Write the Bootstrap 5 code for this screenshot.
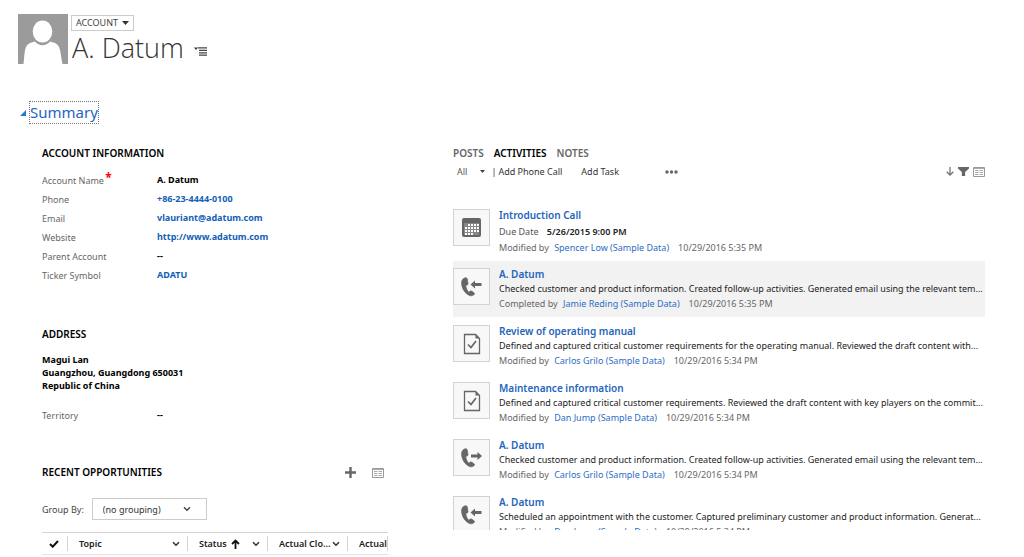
<!DOCTYPE html>
<html lang="en">
<head>
<meta charset="utf-8">
<meta name="viewport" content="width=device-width, initial-scale=1">
<title>Account: A. Datum</title>
<link rel="stylesheet" href="https://cdn.jsdelivr.net/npm/bootstrap@5.3.0/dist/css/bootstrap.min.css">
<style>
body { font-family: "Noto Sans", "Open Sans", sans-serif; font-size: 9px; line-height: 15px; color: #000; background: #fff; overflow: hidden; }
a { color: #1160b7; text-decoration: none; }
button { background: none; border: 0; padding: 0; color: inherit; }
svg { display: block; flex: none; }
h2 { font-size: 10px; line-height: 15px; font-weight: 600; margin: 0; }
.avatar { width: 50px; height: 50px; }
.entity-head { padding: 14px 18px 0; gap: 3px; }
.entity-type { border: 1px solid #ccc; color: #444; height: 16px; line-height: 14px; padding: 0 4px; gap: 4px; margin-top: 1px; }
.entity-name { font-family: "Open Sans", "Noto Sans", sans-serif; font-size: 27px; font-weight: 300; line-height: 34px; color: #333; margin: 0; }
.name-row { gap: 10px; padding-left: 1px; }
.name-row button { margin-top: 6px; }
.section-head { padding: 36px 20px 0; gap: 3px; }
.section-link { font-size: 15px; line-height: 21px; color: #1f66c1; border: 1px dotted #777; }
.form-grid { display: grid; grid-template-columns: minmax(0, 346fr) minmax(0, 532fr); column-gap: 65px; padding: 22px 39px 0 42px; }
.field { line-height: 19px; }
.field dt { width: 115px; font-weight: 400; color: #666; padding-top: 1px; margin-bottom: -1px; }
.field dd { margin: 0; font-weight: 700; }
.required { color: #f00; font-size: 12px; line-height: 9px; font-weight: 700; margin-left: -1px; vertical-align: 2px; }
.address { line-height: 13px; font-weight: 700; font-style: normal; margin: 0; }
.gap-fields { margin-top: 9px; }
.gap-address { margin-top: 43px; }
.gap-lines { margin-top: 11px; }
.gap-territory { margin-top: 13px; }
.gap-opps { margin-top: 41px; }
.group-by { margin-top: 18px; gap: 8px; color: #444; }
.group-select { width: 115px; height: 22px; padding: 0 10px; border: 1px solid #ccc; border-radius: 0; font-size: 9px; color: #333; appearance: none;
  background: #fff url("data:image/svg+xml,%3Csvg xmlns='http://www.w3.org/2000/svg' viewBox='0 0 8 6'%3E%3Cpath d='M1 1.3 4 4.3 7 1.3' fill='none' stroke='%23444' stroke-width='1.4'/%3E%3C/svg%3E") no-repeat right 15px center / 8px 6px; }
.opps-wrap { overflow: hidden; margin-top: 12px; }
.opps { table-layout: fixed; width: 100%; border-collapse: separate; border-spacing: 0; }
.opps th { height: 23px; padding: 0; border-top: 1px solid #d4d4d4; border-bottom: 1px solid #e2e2e2; font-weight: 600; color: #222; white-space: nowrap; overflow: hidden; }
.opps .cell { border-right: 1px solid #d4d4d4; height: 15px; padding: 0 7px 0 11px; }
.opps th:first-child .cell { padding: 0 7px; }
.col-check { width: 26px; } .col-topic { width: 120px; } .col-mid { width: 80px; }
.tabs { gap: 10px; font-size: 10px; color: #666; }
.tabs button { font-weight: 600; }
.tabs .active { color: #000; }
.tools { padding-left: 4px; height: 17px; margin-top: 2px; margin-bottom: 1px; color: #333; }
.tools .filter { gap: 13px; color: #555; margin-right: 6px; }
.tools .phone { margin: 0 19px 0 2px; }
.tools .more { margin-left: 46px; }
.tools .funnel { margin-right: 4px; }
.feed { max-height: 328px; overflow: hidden; margin: 22px 0 0; }
.feed-item { height: 56px; margin-bottom: 1px; padding-top: 7px; gap: 9px; white-space: nowrap; }
.feed-item:first-child { height: 58px; }
.feed-item.selected { background: #f2f2f2; }
.tile { width: 37px; height: 37px; border: 1px solid #d2d2d2; background: #f8f8f8; color: #666; flex: none; }
.feed-title { display: block; font-size: 10px; line-height: 13px; font-weight: 600; color: #2365bd; }
.feed-text { color: #222; overflow: hidden; }
.feed-text.due { color: #555; line-height: 17px; padding-top: 1px; }
.feed-text.due strong { font-weight: 600; color: #222; margin-left: 6px; }
.feed-meta { color: #666; }
.feed-meta a { color: #2d6dc5; margin: 0 9px 0 3px; }
</style>
</head>
<body>
<svg class="d-none" aria-hidden="true">
  <symbol id="chev" viewBox="0 0 8 6"><path d="M1 1.3 4 4.3 7 1.3" fill="none" stroke="#333" stroke-width="1.5"/></symbol>
  <symbol id="sheet" viewBox="0 0 12 10"><path d="M.5.5h11v9H.5z" fill="#fff" stroke="#999"/><path d="M1 1.5h10" stroke="#aaa"/><path d="M2 3.5h3.5M6.500 3.500H10M2 5.500h3.500M6.500 5.500H10M2 7.500h3.500M6.500 7.500H10" stroke="#aaa"/></symbol>
  <symbol id="handset" viewBox="0 0 12 17"><path d="M3.200.7C1.300 1.300.4 3 .5 5.400c.2 4.800 3.500 9.300 7.300 10.500 1.500.4 3.100-.2 3.700-1.300.2-.5 0-.9-.4-1.200l-2-1.400c-.5-.3-1-.2-1.400.2l-.9.8C5 11.400 4.300 9.300 4.100 7.100l1.300-.4c.5-.2.700-.6.6-1.100L5.400 1.600C5.300.9 4.200.4 3.200.7z" fill="currentColor" stroke="currentColor" stroke-width=".6"/></symbol>
  <symbol id="call-in" viewBox="0 0 21 20"><use href="#handset" x="0" y="0" width="14" height="20"/><path d="M9.500 7.500 14 3.500v2.600h6.500v2.800H14v2.600z" fill="currentColor"/></symbol>
  <symbol id="call-out" viewBox="0 0 21 20"><use href="#handset" x="0" y="0" width="14" height="20"/><path d="M21 8 16.500 4v2.600H10v2.800h6.500V12z" fill="currentColor"/></symbol>
  <symbol id="task" viewBox="0 0 18 22"><path d="M1.500 1.500h11l4 4v15h-15z" fill="none" stroke="currentColor" stroke-width="1.300"/><path d="M12.500 1v4.500H17z" fill="currentColor"/><path d="m5 11.500 3 3L13 8" fill="none" stroke="currentColor" stroke-width="1.700"/></symbol>
  <symbol id="appt" viewBox="0 0 19 19"><path d="M2 0h15q2 0 2 2v15q0 2-2 2H2q-2 0-2-2V2q0-2 2-2z" fill="currentColor"/><path d="M2 5h15v12H2z" fill="#888"/><path d="M6 6h2v2H6zm3 0h2v2H9zm3 0h2v2h-2zm3 0h2v2h-2zM3 9h2v2H3zm3 0h2v2H6zm3 0h2v2H9zm3 0h2v2h-2zm3 0h2v2h-2zM3 12h2v2H3zm3 0h2v2H6zm3 0h2v2H9zm3 0h2v2h-2zm3 0h2v2h-2zM3 15h2v2H3zm3 0h2v2H6zm3 0h2v2H9z" fill="#fff"/></symbol>
</svg>

<header class="entity-head d-flex">
  <svg class="avatar" viewBox="0 0 50 50" role="img" aria-label="Account picture"><path d="M0 0h50v50H0z" fill="#9b9b9b"/><ellipse cx="24.500" cy="17.500" rx="9.800" ry="11" fill="#fff"/><path d="M5.500 50C7 38 6 32 12 29l5-1.500c4 5 11 5 15 0l5 1.500c6 3 5 9 7.500 21z" fill="#fff"/></svg>
  <div>
    <button type="button" class="entity-type d-flex align-items-center">ACCOUNT
      <svg width="7" height="4" viewBox="0 0 7 4"><path d="M0 0h7L3.500 4z" fill="#333"/></svg>
    </button>
    <div class="name-row d-flex align-items-center">
      <h1 class="entity-name">A. Datum</h1>
      <button type="button" aria-label="Form sections"><svg width="14" height="9" viewBox="0 0 14 9"><path d="M0 .5h4L2 3z" fill="#333"/><path d="M4 .8h9M5 3.300h8M5 5.800h8M5 8.200h8" stroke="#444" stroke-width="1.200"/></svg></button>
    </div>
  </div>
</header>

<div class="section-head d-flex align-items-center">
  <svg width="6" height="6" viewBox="0 0 6 6"><path d="M6 0v6H0z" fill="#1b7fcc"/></svg>
  <a href="#summary" class="section-link">Summary</a>
</div>

<main id="summary" class="form-grid">
  <div>
    <h2>ACCOUNT INFORMATION</h2>
    <dl class="mb-0 gap-fields">
      <div class="field d-flex"><dt>Account Name <span class="required">*</span></dt><dd>A. Datum</dd></div>
      <div class="field d-flex"><dt>Phone</dt><dd><a href="tel:+862344440100">+86-23-4444-0100</a></dd></div>
      <div class="field d-flex"><dt>Email</dt><dd><a href="mailto:vlauriant@adatum.com">vlauriant@adatum.com</a></dd></div>
      <div class="field d-flex"><dt>Website</dt><dd><a href="http://www.adatum.com">http://www.adatum.com</a></dd></div>
      <div class="field d-flex"><dt>Parent Account</dt><dd>--</dd></div>
      <div class="field d-flex"><dt>Ticker Symbol</dt><dd><a href="#ticker">ADATU</a></dd></div>
    </dl>

    <h2 class="gap-address">ADDRESS</h2>
    <address class="address gap-lines">Magui Lan<br>Guangzhou, Guangdong 650031<br>Republic of China</address>
    <dl class="mb-0 gap-territory">
      <div class="field d-flex"><dt>Territory</dt><dd>--</dd></div>
    </dl>

    <div class="d-flex align-items-center gap-opps">
      <h2 class="me-auto">RECENT OPPORTUNITIES</h2>
      <button type="button" class="me-3" aria-label="Add opportunity"><svg width="11" height="11" viewBox="0 0 11 11"><path d="M5.500 0v11M0 5.500h11" stroke="#666" stroke-width="2.400"/></svg></button>
      <button type="button" class="me-1" aria-label="Open view"><svg width="12" height="10"><use href="#sheet"/></svg></button>
    </div>
    <div class="d-flex align-items-center group-by">
      <label for="grouping">Group By:</label>
      <select id="grouping" class="group-select"><option>(no grouping)</option></select>
    </div>
    <div class="opps-wrap">
      <table class="opps">
        <colgroup><col class="col-check"><col class="col-topic"><col class="col-mid"><col class="col-mid"><col></colgroup>
        <thead><tr>
          <th scope="col" aria-label="Selected"><div class="cell d-flex align-items-center"><svg width="10" height="8" viewBox="0 0 10 8"><path d="m1 4 2.700 2.700L9 1" fill="none" stroke="#111" stroke-width="2"/></svg></div></th>
          <th scope="col"><div class="cell d-flex align-items-center justify-content-between">Topic<svg width="8" height="6"><use href="#chev"/></svg></div></th>
          <th scope="col"><div class="cell d-flex align-items-center">Status<svg class="ms-1" width="9" height="10" viewBox="0 0 9 10"><path d="M4.500 10V1.500M1 5l3.500-3.500L8 5" fill="none" stroke="#111" stroke-width="1.800"/></svg><svg class="ms-auto" width="8" height="6"><use href="#chev"/></svg></div></th>
          <th scope="col"><div class="cell d-flex align-items-center justify-content-between">Actual Clo...<svg width="8" height="6"><use href="#chev"/></svg></div></th>
          <th scope="col"><div class="cell d-flex align-items-center pe-0 overflow-hidden">Actual</div></th>
        </tr></thead>
      </table>
    </div>
  </div>

  <div>
    <div class="tabs d-flex" role="tablist">
      <button type="button" role="tab" aria-selected="false">POSTS</button>
      <button type="button" role="tab" aria-selected="true" class="active">ACTIVITIES</button>
      <button type="button" role="tab" aria-selected="false">NOTES</button>
    </div>
    <div class="tools d-flex align-items-center">
      <button type="button" class="filter d-flex align-items-center">All <svg width="5" height="3" viewBox="0 0 5 3"><path d="M0 0h5L2.500 3z" fill="#444"/></svg></button>
      <span>|</span>
      <button type="button" class="phone">Add Phone Call</button>
      <button type="button">Add Task</button>
      <button type="button" class="more" aria-label="More commands"><svg width="13" height="4" viewBox="0 0 13 4"><g fill="#666"><circle cx="2" cy="2" r="1.700"/><circle cx="6.500" cy="2" r="1.700"/><circle cx="11" cy="2" r="1.700"/></g></svg></button>
      <div class="ms-auto d-flex align-items-center">
        <button type="button" class="me-1" aria-label="Sort descending"><svg width="8" height="9" viewBox="0 0 8 9"><path d="M4 0v8M.7 4.800 4 8l3.300-3.200" fill="none" stroke="#777" stroke-width="1.300"/></svg></button>
        <button type="button" class="funnel" aria-label="Filter"><svg width="11" height="9" viewBox="0 0 10 9" preserveAspectRatio="none"><path d="M0 0h10v1.500L6.500 5v4h-3V5L0 1.500z" fill="#666"/></svg></button>
        <button type="button" aria-label="Open view"><svg width="12" height="10"><use href="#sheet"/></svg></button>
      </div>
    </div>

    <ul class="feed list-unstyled">
      <li class="feed-item d-flex">
        <div class="tile d-flex align-items-center justify-content-center"><svg width="19" height="19"><use href="#appt"/></svg></div>
        <div>
          <a href="#a1" class="feed-title">Introduction Call</a>
          <div class="feed-text due">Due Date <strong>5/26/2015 9:00 PM</strong></div>
          <div class="feed-meta">Modified by <a href="#u1">Spencer Low (Sample Data)</a>10/29/2016 5:35 PM</div>
        </div>
      </li>
      <li class="feed-item selected d-flex">
        <div class="tile d-flex align-items-center justify-content-center"><svg width="21" height="20"><use href="#call-in"/></svg></div>
        <div>
          <a href="#a2" class="feed-title">A. Datum</a>
          <div class="feed-text">Checked customer and product information. Created follow-up activities. Generated email using the relevant tem...</div>
          <div class="feed-meta">Completed by <a href="#u2">Jamie Reding (Sample Data)</a>10/29/2016 5:35 PM</div>
        </div>
      </li>
      <li class="feed-item d-flex">
        <div class="tile d-flex align-items-center justify-content-center"><svg width="18" height="22"><use href="#task"/></svg></div>
        <div>
          <a href="#a3" class="feed-title">Review of operating manual</a>
          <div class="feed-text">Defined and captured critical customer requirements for the operating manual. Reviewed the draft content with...</div>
          <div class="feed-meta">Modified by <a href="#u3">Carlos Grilo (Sample Data)</a>10/29/2016 5:34 PM</div>
        </div>
      </li>
      <li class="feed-item d-flex">
        <div class="tile d-flex align-items-center justify-content-center"><svg width="18" height="22"><use href="#task"/></svg></div>
        <div>
          <a href="#a4" class="feed-title">Maintenance information</a>
          <div class="feed-text">Defined and captured critical customer requirements. Reviewed the draft content with key players on the commit...</div>
          <div class="feed-meta">Modified by <a href="#u4">Dan Jump (Sample Data)</a>10/29/2016 5:34 PM</div>
        </div>
      </li>
      <li class="feed-item d-flex">
        <div class="tile d-flex align-items-center justify-content-center"><svg width="21" height="20"><use href="#call-out"/></svg></div>
        <div>
          <a href="#a5" class="feed-title">A. Datum</a>
          <div class="feed-text">Checked customer and product information. Created follow-up activities. Generated email using the relevant tem...</div>
          <div class="feed-meta">Modified by <a href="#u3">Carlos Grilo (Sample Data)</a>10/29/2016 5:34 PM</div>
        </div>
      </li>
      <li class="feed-item d-flex">
        <div class="tile d-flex align-items-center justify-content-center"><svg width="21" height="20"><use href="#call-in"/></svg></div>
        <div>
          <a href="#a6" class="feed-title">A. Datum</a>
          <div class="feed-text">Scheduled an appointment with the customer. Captured preliminary customer and product information. Generat...</div>
          <div class="feed-meta">Modified by <a href="#u4">Dan Jump (Sample Data)</a>10/29/2016 5:34 PM</div>
        </div>
      </li>
    </ul>
  </div>
</main>
<script src="https://cdn.jsdelivr.net/npm/bootstrap@5.3.0/dist/js/bootstrap.bundle.min.js"></script>
</body>
</html>
